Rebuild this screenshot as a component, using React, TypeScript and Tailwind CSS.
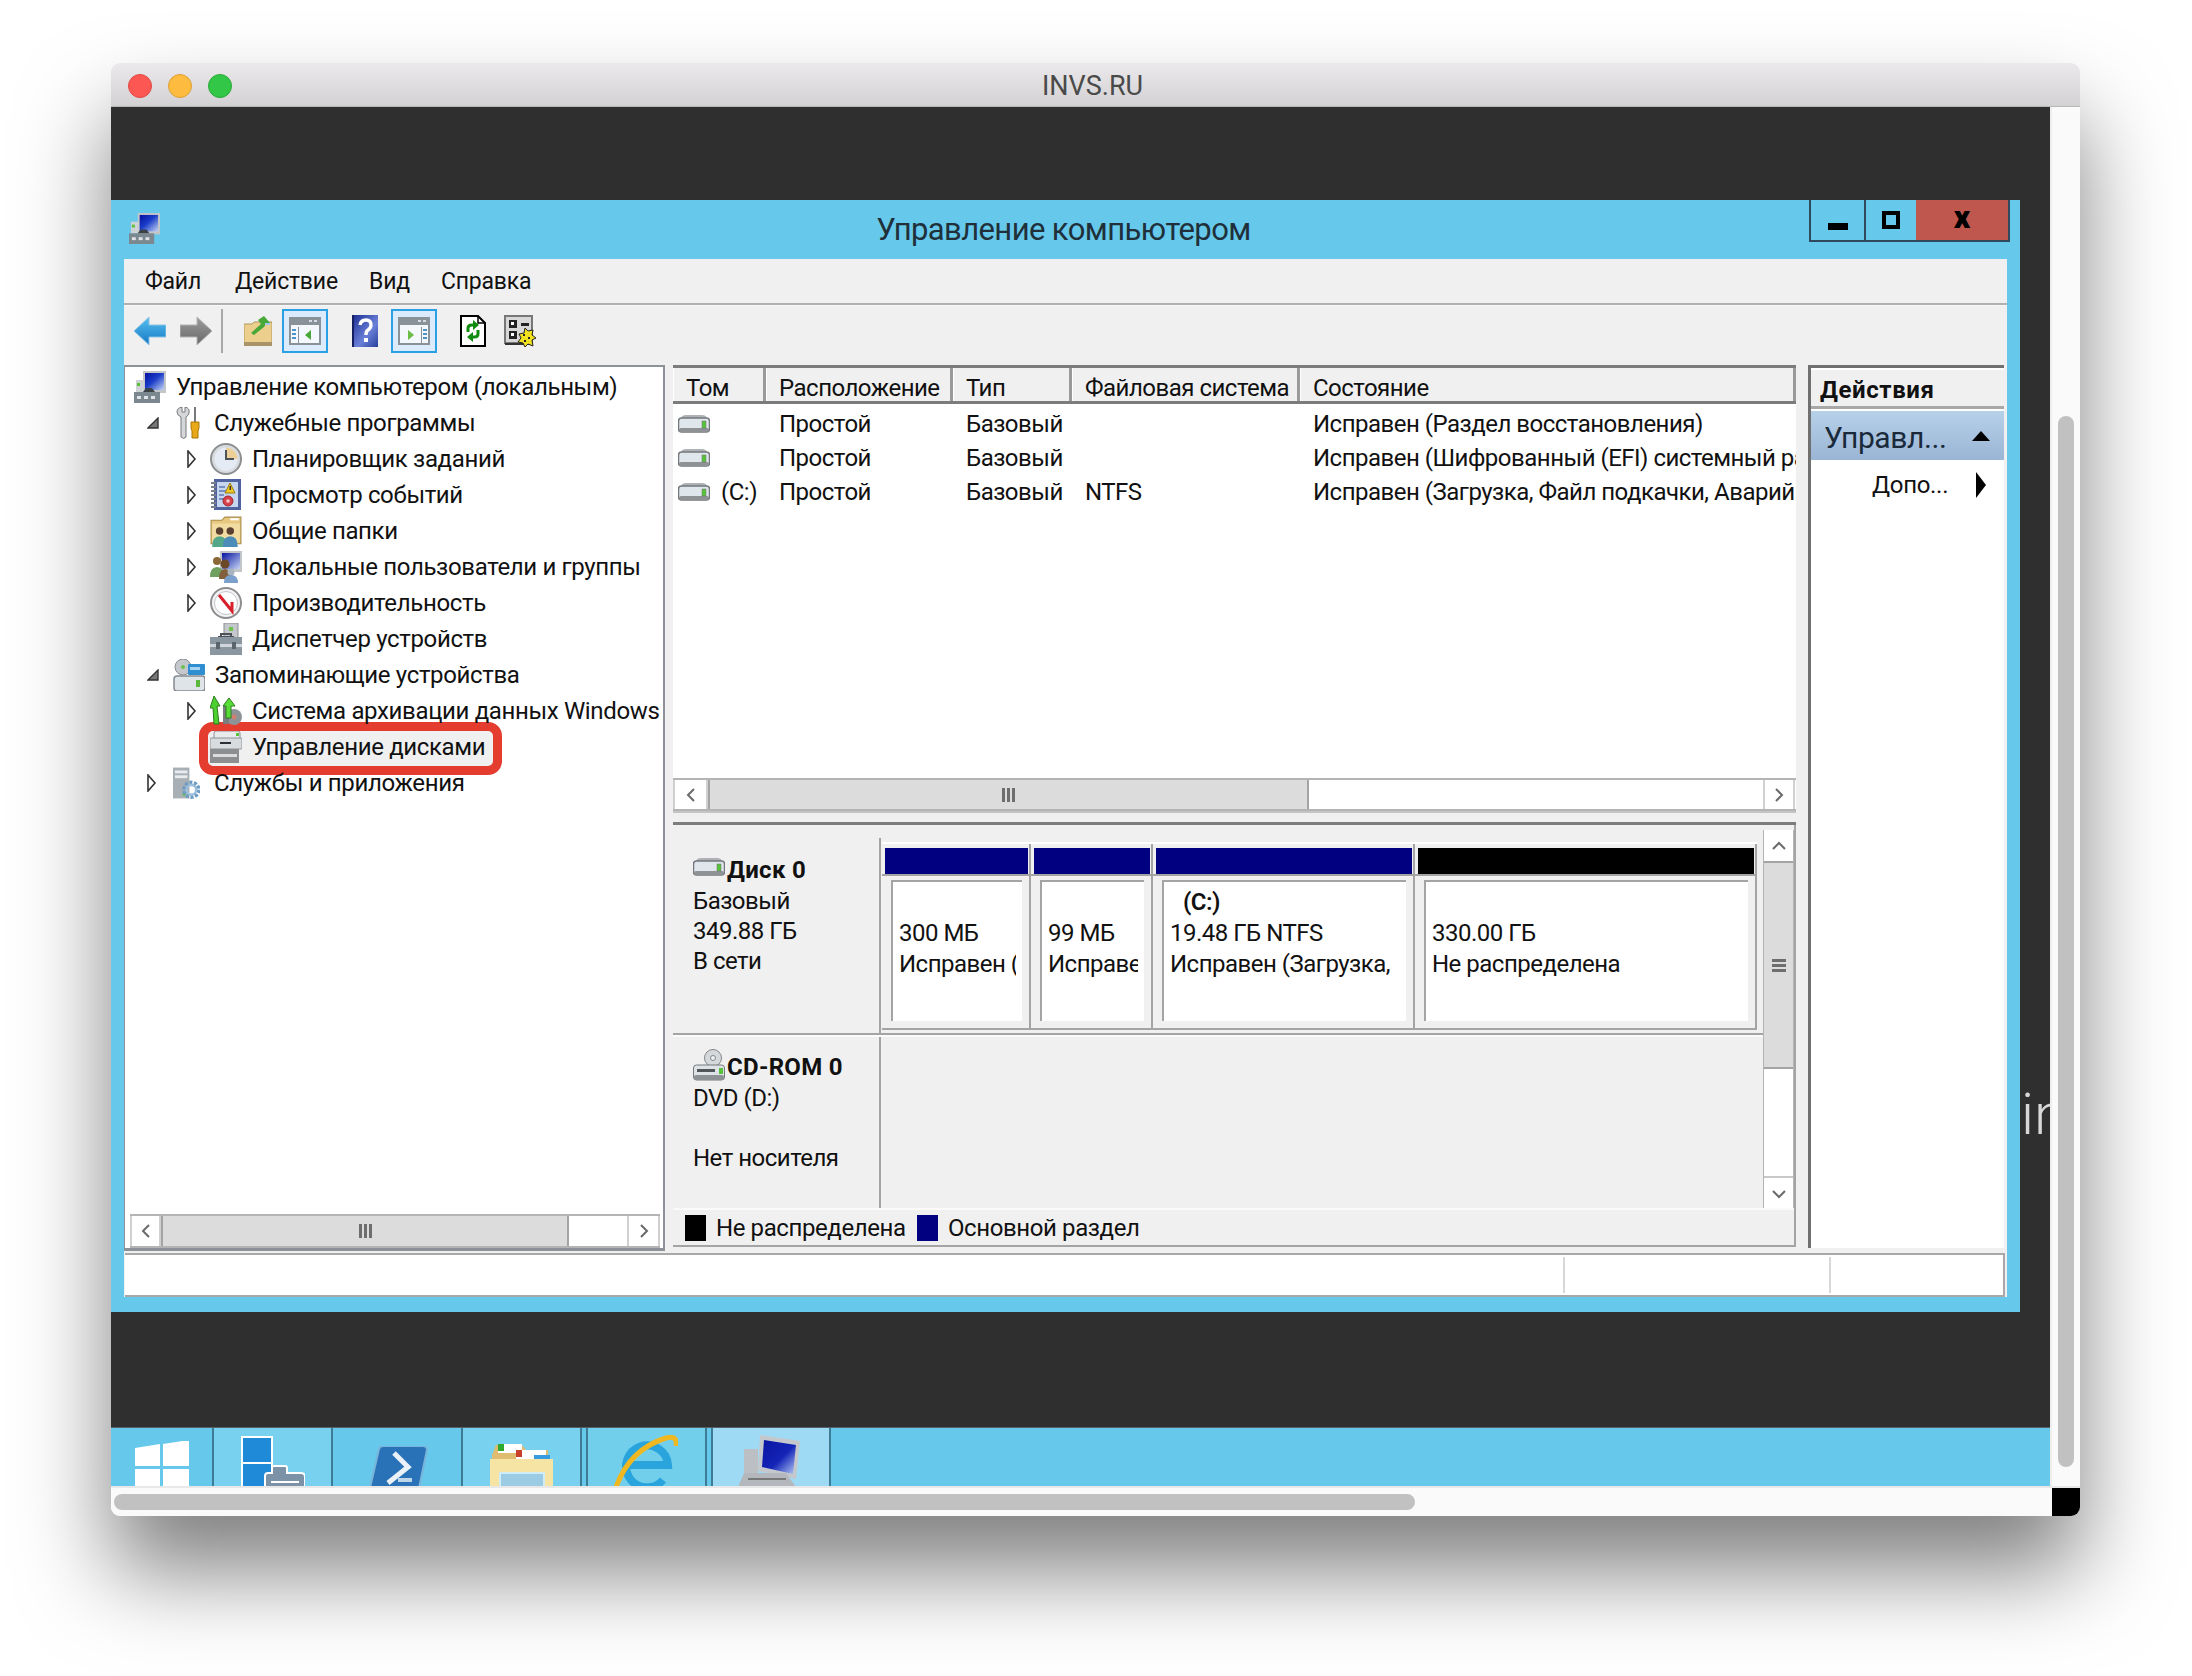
const tree = [
  { level: 0, icon: "computer", label: "Управление компьютером (локальным)" },
  { level: 1, exp: "open", icon: "tools", label: "Служебные программы" },
  { level: 2, exp: "closed", icon: "clock", label: "Планировщик заданий" },
  { level: 2, exp: "closed", icon: "events", label: "Просмотр событий" },
  { level: 2, exp: "closed", icon: "shared", label: "Общие папки" },
  { level: 2, exp: "closed", icon: "users", label: "Локальные пользователи и группы" },
  { level: 2, exp: "closed", icon: "perf", label: "Производительность" },
  { level: 2, icon: "devices", label: "Диспетчер устройств" },
  { level: 1, exp: "open", icon: "storage", label: "Запоминающие устройства" },
  { level: 2, exp: "closed", icon: "backup", label: "Система архивации данных Windows" },
  { level: 2, icon: "disks", label: "Управление дисками", marked: true },
  { level: 1, exp: "closed", icon: "services", label: "Службы и приложения" },
];

const columns = [
  { title: "Том", w: "w-[93px]" },
  { title: "Расположение", w: "w-[187px]" },
  { title: "Тип", w: "w-[119px]" },
  { title: "Файловая система", w: "w-[228px]" },
  { title: "Состояние", w: "flex-1" },
];

const volumes = [
  ["", "Простой", "Базовый", "", "Исправен (Раздел восстановления)"],
  ["", "Простой", "Базовый", "", "Исправен (Шифрованный (EFI) системный раздел)"],
  ["(C:)", "Простой", "Базовый", "NTFS", "Исправен (Загрузка, Файл подкачки, Аварийный дамп)"],
];

const parts = [
  { w: "w-[149px]", bar: "bg-[#000080]", lines: ["", "300 МБ", "Исправен (Раздел"] },
  { w: "w-[122px]", bar: "bg-[#000080]", lines: ["", "99 МБ", "Исправен (Шифр"] },
  { w: "w-[262px]", bar: "bg-[#000080]", lines: ["(C:)", "19.48 ГБ NTFS", "Исправен (Загрузка,"] },
  { w: "w-[342px]", bar: "bg-black", lines: ["", "330.00 ГБ", "Не распределена"] },
];

function Computer({ className }: { className?: string }) {
  return (
    <svg viewBox="0 0 32 32" className={className}>
      <defs>
        <linearGradient id="scr" x1="0" y1="0" x2="1" y2="1">
          <stop offset="0" stopColor="#0612a0" />
          <stop offset="0.45" stopColor="#1a3cc8" />
          <stop offset="1" stopColor="#c4d4f4" />
        </linearGradient>
      </defs>
      <rect x="9" y="0" width="23" height="22" fill="#c3c6c9" />
      <rect x="11" y="2" width="19" height="17" fill="url(#scr)" />
      <rect x="2" y="9" width="8" height="12" fill="#cfd2d4" />
      <rect x="3" y="12" width="3" height="3" fill="#58c23a" />
      <rect x="0" y="21" width="26" height="11" fill="#7c8890" />
      <rect x="3" y="25" width="4" height="3" fill="#dfe3e6" />
      <rect x="10" y="25" width="4" height="3" fill="#dfe3e6" />
      <rect x="17" y="25" width="4" height="3" fill="#dfe3e6" />
      <path d="M9 21l3-4h6l3 4z" fill="#3a4248" />
    </svg>
  );
}

function Tools({ className }: { className?: string }) {
  return (
    <svg viewBox="0 0 24 32" className={className}>
      <path d="M1 5q0-4 5-5v5h3V0q5 1 4 6-1 3-3 4v20q-2 3-5 0V10Q1 8 1 5z" fill="#d4d6d8" stroke="#77797c" />
      <rect x="18" y="0" width="2" height="15" fill="#77797c" />
      <path d="M15 15h8v6l-1 3v7h-6v-7l-1-3z" fill="#e8a818" stroke="#a87808" />
    </svg>
  );
}

function Clock({ className }: { className?: string }) {
  return (
    <svg viewBox="0 0 32 32" className={className}>
      <circle cx="16" cy="16" r="15" fill="#d8dce0" stroke="#8c8e90" strokeWidth="2" />
      <circle cx="16" cy="16" r="11.5" fill="#e4ebf5" />
      <path d="M16 16V4.5A11.5 11.5 0 0 1 27.5 16z" fill="#ecd098" />
      <path d="M16 7v9h8" fill="none" stroke="#4c5358" strokeWidth="2" />
    </svg>
  );
}

function Events({ className }: { className?: string }) {
  return (
    <svg viewBox="0 0 30 32" className={className}>
      <rect x="3" y="0" width="27" height="31" fill="#4e63a0" />
      <rect x="6" y="3" width="21" height="25" fill="#c6d6ee" />
      <path d="M8 8h6M8 12h7M8 16h5M8 20h5" stroke="#5e78b4" strokeWidth="1.5" />
      <path d="M0 4h5M0 8h5M0 12h5M0 16h5M0 20h5M0 24h5M0 28h5" stroke="#7c8088" strokeWidth="2" />
      <path d="M19 4l5 10h-10z" fill="#f0c820" stroke="#9a7c10" />
      <rect x="18.5" y="7" width="1.5" height="4" fill="#333" />
      <circle cx="17" cy="22" r="5" fill="#d8404a" stroke="#a02830" />
      <circle cx="17" cy="22" r="1.8" fill="#f4c8c8" />
    </svg>
  );
}

function Shared({ className }: { className?: string }) {
  return (
    <svg viewBox="0 0 30 30" className={className}>
      <path d="M1 5h10l3-3h15v25H1z" fill="#e8c880" stroke="#a88a48" />
      <rect x="19" y="3" width="8" height="2" fill="#fff" />
      <rect x="2" y="8" width="26" height="18" fill="#f2dca2" />
      <circle cx="9" cy="15" r="3.5" fill="#5a4030" />
      <circle cx="19" cy="15" r="3.5" fill="#5a4030" />
      <path d="M2 30q0-10 7-10t7 10z" fill="#52a888" />
      <path d="M12 30q0-10 7-10t7 10z" fill="#4c8cb8" />
    </svg>
  );
}

function Users({ className }: { className?: string }) {
  return (
    <svg viewBox="0 0 32 32" className={className}>
      <defs>
        <linearGradient id="scr2" x1="0" y1="0" x2="1" y2="1">
          <stop offset="0" stopColor="#0612a0" />
          <stop offset="1" stopColor="#c4d4f4" />
        </linearGradient>
      </defs>
      <rect x="10" y="0" width="22" height="21" fill="#c3c6c9" />
      <rect x="12" y="2" width="18" height="16" fill="url(#scr2)" />
      <circle cx="7" cy="10" r="4" fill="#8a6838" />
      <path d="M0 26q0-10 7-10t7 10z" fill="#70a060" />
      <circle cx="15" cy="13" r="4.5" fill="#6a4828" />
      <path d="M9 28q0-10 6-10t7 10z" fill="#82603c" />
      <circle cx="21" cy="21" r="3.5" fill="#a8b4c0" />
      <path d="M14 32q0-8 7-8t7 8z" fill="#7ca0cc" />
    </svg>
  );
}

function Perf({ className }: { className?: string }) {
  return (
    <svg viewBox="0 0 32 32" className={className}>
      <circle cx="16" cy="16" r="15" fill="#f4f4f6" stroke="#8e8e90" strokeWidth="2" />
      <circle cx="16" cy="16" r="11.5" fill="#fff" stroke="#c4c4c8" />
      <path d="M9 8l13 16v-9" fill="none" stroke="#d8202c" strokeWidth="3" />
    </svg>
  );
}

function Devices({ className }: { className?: string }) {
  return (
    <svg viewBox="0 0 32 32" className={className}>
      <rect x="14" y="0" width="14" height="18" fill="#c4c8cc" stroke="#8a8e92" />
      <rect x="19" y="4" width="4" height="4" fill="#6cc24a" />
      <path d="M8 14h16M11 14v-3h10v3" fill="none" stroke="#4c5258" strokeWidth="2" />
      <rect x="0" y="14" width="32" height="18" fill="#8a96a0" />
      <rect x="0" y="21" width="32" height="3" fill="#cfd5da" />
      <rect x="6" y="19" width="4" height="7" fill="#5a646c" />
      <rect x="22" y="19" width="4" height="7" fill="#5a646c" />
    </svg>
  );
}

function Storage({ className }: { className?: string }) {
  return (
    <svg viewBox="0 0 32 32" className={className}>
      <circle cx="10" cy="8" r="8" fill="#c4c8cc" stroke="#8a8e92" />
      <circle cx="10" cy="8" r="2" fill="#6cc24a" />
      <rect x="15" y="5" width="17" height="11" rx="1" fill="#2f8ed0" />
      <rect x="17" y="8" width="10" height="3" fill="#a4d4f2" />
      <rect x="1" y="17" width="31" height="15" rx="3" fill="#dfe4e8" stroke="#858b90" strokeWidth="1.5" />
      <rect x="23" y="21" width="4" height="7" fill="#5cb83c" />
    </svg>
  );
}

function Backup({ className }: { className?: string }) {
  return (
    <svg viewBox="0 0 32 30" className={className}>
      <circle cx="24" cy="21" r="8" fill="#8e9398" />
      <circle cx="24" cy="21" r="2.5" fill="#d08070" />
      <rect x="13" y="10" width="6" height="18" fill="#7a7e82" />
      <path d="M4 0l6 10-3 0 2 18H4L3 12H0z" fill="#4cd030" stroke="#2e7c1c" />
      <path d="M19 2l6 8h-4v12h-5V10h-3z" fill="#58dc38" stroke="#2e7c1c" />
    </svg>
  );
}

function Disks({ className }: { className?: string }) {
  return (
    <svg viewBox="0 0 32 32" className={className}>
      <rect x="4" y="0" width="26" height="10" rx="2" fill="#e8eaec" stroke="#8a8e92" />
      <rect x="0" y="7" width="32" height="11" rx="1" fill="#d8dcde" stroke="#8e9296" />
      <rect x="10" y="11" width="11" height="2" fill="#2a3036" />
      <rect x="26" y="2" width="3" height="3" fill="#58c23a" />
      <rect x="0" y="18" width="29" height="14" fill="#8c8e90" />
      <rect x="3" y="23" width="24" height="3" fill="#dcdcdc" />
    </svg>
  );
}

function Services({ className }: { className?: string }) {
  return (
    <svg viewBox="0 0 28 32" className={className}>
      <rect x="0" y="0" width="17" height="32" fill="#a8b0b6" />
      <rect x="2" y="3" width="13" height="3" fill="#e8ecee" />
      <rect x="2" y="8" width="13" height="3" fill="#e8ecee" />
      <rect x="10" y="26" width="3" height="3" fill="#58c23a" />
      <circle cx="19" cy="23" r="7" fill="none" stroke="#6e9cc4" strokeWidth="5" strokeDasharray="3 1.4" />
      <circle cx="19" cy="23" r="5" fill="none" stroke="#9cc0dc" strokeWidth="2.5" />
    </svg>
  );
}

function Drive({ className }: { className?: string }) {
  return (
    <svg viewBox="0 0 32 18" className={className}>
      <path d="M3 3Q4 0 8 0h16q4 0 5 3z" fill="#aeb2b6" />
      <rect x="0.5" y="3" width="31" height="14" rx="3" fill="#dfe6ec" stroke="#74787c" strokeWidth="1.5" />
      <rect x="1" y="13" width="30" height="4" rx="2" fill="#8e9294" />
      <rect x="24" y="6" width="4" height="7" fill="#58c23a" stroke="#707070" strokeWidth="0.5" />
    </svg>
  );
}

function CdDrive({ className }: { className?: string }) {
  return (
    <svg viewBox="0 0 32 32" className={className}>
      <circle cx="20" cy="9" r="8.5" fill="#d4d8da" stroke="#84888c" />
      <circle cx="20" cy="9" r="2.5" fill="#f0f0f0" stroke="#84888c" />
      <rect x="0.5" y="16" width="31" height="15" rx="3" fill="#dde2e6" stroke="#74787c" />
      <rect x="4" y="20" width="18" height="3" fill="#50565a" />
      <rect x="1" y="26" width="30" height="5" rx="2" fill="#8e9294" />
      <rect x="26" y="19" width="4" height="6" fill="#58c23a" />
    </svg>
  );
}

const icons: Record<string, (p: { className?: string }) => React.ReactElement> = {
  computer: Computer,
  tools: Tools,
  clock: Clock,
  events: Events,
  shared: Shared,
  users: Users,
  perf: Perf,
  devices: Devices,
  storage: Storage,
  backup: Backup,
  disks: Disks,
  services: Services,
};

function ArrowLeft() {
  return (
    <svg viewBox="0 0 32 28" className="w-[32px] h-[28px]">
      <defs>
        <linearGradient id="ab" x1="0" y1="0" x2="0" y2="1">
          <stop offset="0" stopColor="#58c0f0" />
          <stop offset="1" stopColor="#1478c4" />
        </linearGradient>
      </defs>
      <path d="M0 14L15 0v8h17v12H15v8z" fill="url(#ab)" stroke="#8cc4e4" />
    </svg>
  );
}

function ArrowRight() {
  return (
    <svg viewBox="0 0 32 28" className="w-[32px] h-[28px]">
      <defs>
        <linearGradient id="ag" x1="0" y1="0" x2="0" y2="1">
          <stop offset="0" stopColor="#9c9c9c" />
          <stop offset="1" stopColor="#686868" />
        </linearGradient>
      </defs>
      <path d="M32 14L17 0v8H0v12h17v8z" fill="url(#ag)" stroke="#b4b4b4" />
    </svg>
  );
}

function UpFolder() {
  return (
    <svg viewBox="0 0 28 30" className="w-[28px] h-[30px]">
      <path d="M0 8h8l2-2h18v24H0z" fill="#eccf8c" stroke="#b09860" />
      <rect x="0" y="26" width="28" height="4" fill="#a89468" />
      <path d="M20 0l6 7-4 1 -2 3-10 8-3-2 10-9-3-4z" fill="#48a838" />
      <rect x="21" y="7" width="5" height="2" fill="#a0c8f0" />
    </svg>
  );
}

function PaneIcon({ right }: { right?: boolean }) {
  return (
    <svg viewBox="0 0 32 28" className="w-[32px] h-[28px]">
      <rect x="1" y="1" width="30" height="26" fill="#f4f7fb" stroke="#8a9299" strokeWidth="2" />
      <rect x="1" y="1" width="30" height="7" fill="#8a9299" />
      <rect x="20" y="3" width="3" height="2" fill="#d8dce0" />
      <rect x="25" y="3" width="3" height="2" fill="#d8dce0" />
      {right ? (
        <>
          <rect x="23" y="10" width="1" height="16" fill="#8a9299" />
          <rect x="25" y="12" width="4" height="2" fill="#4c94c8" />
          <rect x="25" y="16" width="4" height="2" fill="#4c94c8" />
          <rect x="25" y="20" width="4" height="2" fill="#4c94c8" />
          <path d="M10 13l6 5-6 5z" fill="#6cbc48" />
        </>
      ) : (
        <>
          <rect x="9" y="10" width="1" height="16" fill="#8a9299" />
          <rect x="3" y="12" width="4" height="2" fill="#4c94c8" />
          <rect x="3" y="16" width="4" height="2" fill="#4c94c8" />
          <rect x="3" y="20" width="4" height="2" fill="#4c94c8" />
          <path d="M22 13l-6 5 6 5z" fill="#48a838" />
        </>
      )}
    </svg>
  );
}

function HelpBook() {
  return (
    <svg viewBox="0 0 26 32" className="w-[26px] h-[32px]">
      <defs>
        <linearGradient id="hb" x1="0" y1="0" x2="1" y2="1">
          <stop offset="0" stopColor="#1a2c90" />
          <stop offset="0.6" stopColor="#6a80d8" />
          <stop offset="1" stopColor="#26409c" />
        </linearGradient>
      </defs>
      <rect width="26" height="32" fill="url(#hb)" />
      <rect width="2" height="32" fill="#141e60" />
      <path d="M8 10q1-5 6-5t5 5q0 3-3 5-2 1-2 5" fill="none" stroke="#fff" strokeWidth="3.4" />
      <rect x="12" y="23" width="4" height="4" fill="#fff" />
    </svg>
  );
}

function RefreshDoc() {
  return (
    <svg viewBox="0 0 26 32" className="w-[26px] h-[32px]">
      <path d="M1 1h17l7 7v23H1z" fill="#fff" stroke="#000" strokeWidth="2" />
      <path d="M18 1v7h7" fill="none" stroke="#000" strokeWidth="1.5" />
      <path d="M8 17v-4q0-3 4-3h2M18 15v4q0 3-4 3h-2" fill="none" stroke="#108c10" strokeWidth="3" />
      <path d="M13 5l6 5-6 5zM13 17l-6 5 6 5z" fill="#108c10" />
    </svg>
  );
}

function PropsIcon() {
  return (
    <svg viewBox="0 0 32 32" className="w-[32px] h-[32px]">
      <rect x="1" y="1" width="27" height="27" fill="#d8d8d8" stroke="#777" strokeWidth="2" />
      <rect x="1" y="28" width="27" height="2" fill="#333" />
      <rect x="5" y="5" width="8" height="8" fill="#222" />
      <rect x="7" y="7" width="3" height="3" fill="#fff" />
      <rect x="17" y="8" width="8" height="3" fill="#222" />
      <rect x="5" y="16" width="8" height="8" fill="#222" />
      <rect x="7" y="18" width="3" height="3" fill="#fff" />
      <path d="M21 13l3 3 5-1-1 5 4 3-4 2 1 6-5-2-3 3-2-4-5-1 3-4-2-4 5-1z" fill="#f0e020" stroke="#222" />
      <path d="M19 19h2v2h-2zM24 22h2v2h-2zM20 25h2v2h-2z" fill="#222" />
    </svg>
  );
}

function Grip({ vertical }: { vertical?: boolean }) {
  return vertical ? (
    <div className="flex flex-col gap-[2px]">
      <div className="w-[14px] h-[3px] bg-[#6e6e6e]" />
      <div className="w-[14px] h-[3px] bg-[#6e6e6e]" />
      <div className="w-[14px] h-[3px] bg-[#6e6e6e]" />
    </div>
  ) : (
    <div className="flex gap-[2px]">
      <div className="w-[3px] h-[14px] bg-[#6e6e6e]" />
      <div className="w-[3px] h-[14px] bg-[#6e6e6e]" />
      <div className="w-[3px] h-[14px] bg-[#6e6e6e]" />
    </div>
  );
}

function Chevron({ dir }: { dir: "l" | "r" | "u" | "d" }) {
  const d = { l: "M9 2L3 8l6 6", r: "M3 2l6 6-6 6", u: "M2 10l6-6 6 6", d: "M2 5l6 6 6-6" }[dir];
  const box = dir === "l" || dir === "r" ? "0 0 12 16" : "0 0 16 14";
  const size = dir === "l" || dir === "r" ? "w-[12px] h-[16px]" : "w-[16px] h-[14px]";
  return (
    <svg viewBox={box} className={size}>
      <path d={d} fill="none" stroke="#6a6a6a" strokeWidth="2" />
    </svg>
  );
}

function HScroll({ first, thumb, gap, last, h }: { first: string; thumb: string; gap: string; last: string; h: string }) {
  return (
    <div className={`flex shrink-0 bg-white border-y-2 border-[#b4b4b4] ${h}`}>
      <div className={`${first} flex items-center justify-center border-x-2 border-[#d0d0d0]`}>
        <Chevron dir="l" />
      </div>
      <div className={`${thumb} bg-[#dcdcdc] border-x-2 border-[#a4a4a4] flex items-center justify-center`}>
        <Grip />
      </div>
      <div className={gap} />
      <div className={`${last} flex items-center justify-center border-x-2 border-[#d0d0d0]`}>
        <Chevron dir="r" />
      </div>
    </div>
  );
}

function TreeRow({ row }: { row: (typeof tree)[number] }) {
  const Icon = icons[row.icon];
  const pad = row.level === 0 ? "pl-[9px]" : row.level === 1 ? "pl-[22px]" : "pl-[62px]";
  const slot = row.level === 0 ? "w-0" : row.level === 1 ? "w-[26px]" : "w-[23px]";
  const text = row.level === 0 ? "ml-[10px]" : "ml-[10px]";
  const wide = row.icon === "tools" ? "w-[24px] h-[32px]" : row.icon === "services" ? "w-[28px] h-[32px]" : "w-[32px] h-[32px]";
  const iconSlot = row.icon === "tools" || row.icon === "services" ? "w-[31px] flex justify-end pr-[4px]" : "w-[32px]";
  return (
    <div className={`relative h-[36px] flex items-center shrink-0 ${pad}`}>
      {row.marked && (
        <div className="absolute left-[74px] top-[-7px] w-[303px] h-[53px] rounded-[14px] border-[9px] border-[#e43d30] bg-[#f0f0f0] z-[5]" />
      )}
      <div className={`relative z-10 shrink-0 flex items-center ${slot}`}>
        {row.exp === "closed" && (
          <svg viewBox="0 0 10 18" className="w-[10px] h-[18px]">
            <path d="M1 1l7 8-7 8z" fill="#fff" stroke="#333" strokeWidth="1.6" />
          </svg>
        )}
        {row.exp === "open" && (
          <svg viewBox="0 0 12 12" className="w-[12px] h-[12px]">
            <path d="M11 1v10H1z" fill="#777" stroke="#333" strokeWidth="1.4" />
          </svg>
        )}
      </div>
      <div className={`relative z-10 shrink-0 ${iconSlot}`}>
        <Icon className={wide} />
      </div>
      <span className={`relative z-10 whitespace-nowrap ${text}`}>{row.label}</span>
    </div>
  );
}

function Part({ part }: { part: (typeof parts)[number] }) {
  return (
    <div className={`${part.w} flex flex-col border-r-2 border-[#a4a4a4] pt-[4px]`}>
      <div className={`h-[26px] ml-[3px] mr-[1px] ${part.bar}`} />
      <div className="h-[2px] bg-[#a4a4a4] mr-[-2px]" />
      <div className="flex-1 pt-[4px] pb-[7px] pl-[9px] pr-[7px] bg-[#f0f0f0] border-b-2 border-[#a4a4a4] flex">
        <div className="flex-1 min-w-0 bg-white border-t-2 border-l-2 border-[#a4a4a4] pt-[5px] pl-[6px] pr-[6px] overflow-hidden">
          {part.lines.map((line, i) => (
            <div key={i} className={`h-[31px] leading-[31px] whitespace-nowrap overflow-hidden ${line === "(C:)" ? "pl-[13px] font-semibold" : ""}`}>
              {line}
            </div>
          ))}
        </div>
      </div>
    </div>
  );
}

export default function App() {
  return (
    <div className="w-[2192px] h-[1676px] bg-white overflow-hidden pl-[111px] pt-[63px] [font-family:Roboto,sans-serif] text-[24px] text-[#111] tracking-[-0.5px]">
      <div className="w-[1969px] h-[1453px] rounded-[9px] overflow-hidden flex flex-col shadow-[0_55px_90px_rgba(0,0,0,0.5)]">
        {/* mac title bar */}
        <div className="relative h-[44px] shrink-0 bg-gradient-to-b from-[#ebe9eb] to-[#d3d1d3] flex items-center justify-center border-b border-[#b8b8b8]">
          <div className="absolute left-[17px] top-[11px] flex gap-[16px]">
            <div className="w-[24px] h-[24px] rounded-full bg-[#fc5753] border border-[#df4744]" />
            <div className="w-[24px] h-[24px] rounded-full bg-[#fdbc40] border border-[#de9f34]" />
            <div className="w-[24px] h-[24px] rounded-full bg-[#33c748] border border-[#27aa35]" />
          </div>
          <span className="text-[#4a4a4a] text-[27px] ml-[-6px] pt-[4px] tracking-normal">INVS.RU</span>
        </div>

        <div className="flex-1 min-h-0 flex">
          {/* remote desktop */}
          <div className="relative w-[1939px] shrink-0 bg-[#2f2f2f] flex flex-col pt-[93px] overflow-hidden">
            <div className="absolute left-[1910px] top-[978px] text-[58px] leading-none text-[#d8d8d8] font-light tracking-normal">in</div>

            <div className="relative w-[1909px] h-[1112px] shrink-0 bg-[#66c8eb] flex flex-col">
              <div className="h-[59px] shrink-0 flex items-start pl-[18px] pr-[10px]">
                <Computer className="w-[31px] h-[31px] mt-[13px] shrink-0" />
                <div className="flex-1 text-center pl-[158px] pt-[11px] text-[31px] leading-[38px] text-[#20303a] tracking-[-0.6px]">Управление компьютером</div>
                <div className="flex h-[42px] border-2 border-t-0 border-[#2f4a5c]">
                  <div className="w-[55px] border-r-2 border-[#2f4a5c] flex items-end justify-center pb-[10px]">
                    <div className="w-[20px] h-[7px] bg-black" />
                  </div>
                  <div className="w-[50px] flex items-start justify-center pt-[11px]">
                    <div className="w-[18px] h-[18px] border-[4px] border-black" />
                  </div>
                  <div className="w-[92px] bg-[#c0574f] flex items-center justify-center text-[32px] font-black text-black pb-[6px] tracking-normal">x</div>
                </div>
              </div>

              <div className="mx-[13px] w-[1883px] h-[1038px] bg-[#f0f0f0] flex flex-col">
                {/* menu */}
                <div className="h-[46px] shrink-0 flex items-center pl-[21px] pt-[2px] border-b-2 border-[#b0b0b0] text-[23px] tracking-[-0.2px]">
                  <span className="w-[90px]">Файл</span>
                  <span className="w-[134px]">Действие</span>
                  <span className="w-[72px]">Вид</span>
                  <span>Справка</span>
                </div>
                {/* toolbar */}
                <div className="h-[60px] shrink-0 flex items-center pl-[10px] pb-[10px] border-t border-[#f8f8f8]">
                  <ArrowLeft />
                  <div className="ml-[14px]">
                    <ArrowRight />
                  </div>
                  <div className="ml-[9px] w-[2px] h-[44px] bg-[#a8a8a8]" />
                  <div className="ml-[21px]">
                    <UpFolder />
                  </div>
                  <div className="ml-[10px] w-[46px] h-[44px] bg-[#dcebfb] border-2 border-[#2ca0e5] flex items-center justify-center">
                    <PaneIcon />
                  </div>
                  <div className="ml-[24px]">
                    <HelpBook />
                  </div>
                  <div className="ml-[13px] w-[46px] h-[44px] bg-[#dcebfb] border-2 border-[#2ca0e5] flex items-center justify-center">
                    <PaneIcon right />
                  </div>
                  <div className="ml-[23px]">
                    <RefreshDoc />
                  </div>
                  <div className="ml-[18px]">
                    <PropsIcon />
                  </div>
                </div>

                {/* panes */}
                <div className="h-[888px] shrink-0 flex">
                  {/* tree */}
                  <div className="w-[541px] h-[886px] shrink-0 bg-white border-t-[2px] border-r-[2px] border-l border-b-[3px] border-[#8c9298] flex flex-col tracking-[-0.35px]">
                    <div className="pt-[2px] flex-1 min-h-0 flex flex-col">
                      {tree.map((row) => (
                        <TreeRow key={row.label} row={row} />
                      ))}
                    </div>
                    <div className="pl-[5px] pr-[3px]">
                      <HScroll first="w-[31px]" thumb="w-[408px]" gap="w-[58px]" last="w-[33px]" h="h-[34px]" />
                    </div>
                  </div>

                  {/* center */}
                  <div className="ml-[8px] w-[1123px] shrink-0 flex flex-col">
                    <div className="h-[446px] shrink-0 bg-white border-t-[3px] border-[#7c7c7c] flex flex-col">
                      <div className="h-[36px] shrink-0 flex bg-[#f0f0f0] border-b-[3px] border-[#7c7c7c]">
                        {columns.map((c) => (
                          <div key={c.title} className={`${c.w} pl-[12px] pt-[6px] flex items-center border-r-[3px] border-[#9a9a9a] border-l border-l-white whitespace-nowrap overflow-hidden`}>
                            {c.title}
                          </div>
                        ))}
                      </div>
                      <div className="flex-1 pt-[3px] overflow-hidden">
                        {volumes.map((v, i) => (
                          <div key={i} className="h-[34px] flex items-center whitespace-nowrap">
                            <div className="w-[93px] shrink-0 flex items-center pl-[5px] gap-[11px]">
                              <Drive className="w-[32px] h-[18px] shrink-0" />
                              <span>{v[0]}</span>
                            </div>
                            <div className="w-[187px] shrink-0 pl-[13px]">{v[1]}</div>
                            <div className="w-[119px] shrink-0 pl-[13px]">{v[2]}</div>
                            <div className="w-[228px] shrink-0 pl-[13px]">{v[3]}</div>
                            <div className="flex-1 min-w-0 pl-[13px] overflow-hidden">{v[4]}</div>
                          </div>
                        ))}
                      </div>
                      <HScroll first="w-[35px]" thumb="w-[601px]" gap="w-[454px]" last="w-[32px]" h="h-[33px]" />
                    </div>

                    {/* splitter */}
                    <div className="h-[14px] shrink-0 bg-[#f0f0f0] border-t-2 border-[#c4c4c4] border-b-[3px] border-b-[#7c7c7c]" />

                    {/* graphical view */}
                    <div className="h-[422px] shrink-0 flex flex-col bg-[#f0f0f0] border-r-2 border-[#a4a4a4]">
                      <div className="h-[383px] shrink-0 pt-[5px] flex">
                        <div className="w-[1090px] shrink-0 pt-[8px] flex flex-col">
                          <div className="h-[197px] shrink-0 flex border-b-2 border-[#a4a4a4]">
                            <div className="w-[203px] pl-[20px] pt-[17px] flex flex-col">
                              <div className="flex items-center h-[30px]">
                                <Drive className="w-[32px] h-[18px] mt-[-6px]" />
                                <span className="ml-[2px] font-bold tracking-[0.3px]">Диск 0</span>
                              </div>
                              <div className="h-[30px] leading-[30px] mt-[1px]">Базовый</div>
                              <div className="h-[30px] leading-[30px]">349.88 ГБ</div>
                              <div className="h-[30px] leading-[30px]">В сети</div>
                            </div>
                            <div className="w-[3px] border-l-2 border-[#a4a4a4] ml-[3px]" />
                            <div className="flex h-[188px] mt-[4px] border-t-2 border-white">
                              {parts.map((p) => (
                                <Part key={p.lines[1]} part={p} />
                              ))}
                            </div>
                          </div>
                          <div className="flex-1 flex border-t-2 border-[#fafafa]">
                            <div className="w-[203px] pl-[20px] pt-[14px] flex flex-col">
                              <div className="flex items-center h-[32px]">
                                <CdDrive className="w-[32px] h-[32px] mt-[-4px]" />
                                <span className="ml-[2px] font-bold tracking-[0.3px]">CD-ROM 0</span>
                              </div>
                              <div className="h-[30px] leading-[30px]">DVD (D:)</div>
                              <div className="h-[30px] leading-[30px] mt-[30px]">Нет носителя</div>
                            </div>
                            <div className="w-[2px] ml-[3px] bg-[#a4a4a4]" />
                          </div>
                        </div>
                        <div className="w-[31px] shrink-0 flex flex-col bg-white border-x border-[#b4b4b4]">
                          <div className="h-[31px] flex items-center justify-center">
                            <Chevron dir="u" />
                          </div>
                          <div className="h-[208px] bg-[#dcdcdc] border-y-2 border-[#a4a4a4] flex items-center justify-center">
                            <Grip vertical />
                          </div>
                          <div className="flex-1" />
                          <div className="h-[32px] flex items-center justify-center border-t-2 border-[#c8c8c8]">
                            <Chevron dir="d" />
                          </div>
                        </div>
                      </div>
                      <div className="h-[39px] shrink-0 flex items-center pl-[12px] pt-[1px] border-t-2 border-[#fafafa] border-b-2 border-b-[#a4a4a4] whitespace-nowrap tracking-[-0.4px]">
                        <div className="w-[21px] h-[26px] bg-black" />
                        <span className="ml-[10px] w-[201px]">Не распределена</span>
                        <div className="w-[21px] h-[26px] bg-[#000080]" />
                        <span className="ml-[10px]">Основной раздел</span>
                      </div>
                    </div>
                  </div>

                  {/* actions */}
                  <div className="ml-[12px] w-[196px] h-[883px] shrink-0 bg-white border-l-[3px] border-t-[3px] border-[#707070] flex flex-col">
                    <div className="h-[41px] shrink-0 bg-[#f0f0f0] border-b-[3px] border-[#a8a8a8] border-t-2 border-t-white pl-[9px] pt-[3px] flex items-center font-bold tracking-[0.6px]">Действия</div>
                    <div className="mt-[2px] h-[49px] shrink-0 bg-gradient-to-b from-[#b7d1ea] to-[#9ab5d5] flex items-center pl-[13px] pr-[14px] pt-[4px] justify-between text-[30px] tracking-[-0.4px] text-[#1a2a3a]">
                      <span>Управл...</span>
                      <svg viewBox="0 0 18 10" className="w-[18px] h-[10px] mt-[-4px]">
                        <path d="M9 0l9 10H0z" fill="#000" />
                      </svg>
                    </div>
                    <div className="h-[50px] shrink-0 flex items-center pl-[61px] pr-[18px] justify-between tracking-[-0.3px]">
                      <span>Допо...</span>
                      <svg viewBox="0 0 10 26" className="w-[10px] h-[26px]">
                        <path d="M0 0l10 13L0 26z" fill="#000" />
                      </svg>
                    </div>
                  </div>
                </div>

                {/* status bar */}
                <div className="h-[44px] shrink-0 ml-[1px] mr-[2px] bg-white border-t-2 border-b-2 border-r-2 border-[#a8a8a8] flex">
                  <div className="w-[1440px] border-r-2 border-[#d8d8d8] my-[2px]" />
                  <div className="w-[266px] border-r-2 border-[#d8d8d8] my-[2px]" />
                </div>
              </div>
            </div>

            {/* task bar */}
            <div className="mt-auto h-[59px] shrink-0 border-t border-[#565f64] bg-[#66c8eb] flex overflow-hidden">
              <div className="w-[103px] shrink-0 border-r-2 border-[#3e7c96] pl-[24px] pt-[13px]">
                <svg viewBox="0 0 54 50" className="w-[54px] h-[50px]">
                  <path d="M0 7l25-4v22H0zM28 3l26-4v26H28zM0 28h25v22H0zM28 28h26v22H28z" fill="#fff" />
                </svg>
              </div>
              <div className="w-[119px] shrink-0 bg-[#78d1ee] border-r-2 border-[#3e7c96] pl-[27px] pt-[8px]">
                <svg viewBox="0 0 64 56" className="w-[64px] h-[56px]">
                  <rect x="1" y="1" width="30" height="26" fill="#1e8ad8" stroke="#fff" strokeWidth="2" />
                  <rect x="1" y="27" width="30" height="29" fill="#1e8ad8" stroke="#fff" strokeWidth="2" />
                  <path d="M24 40q0-3 3-3h4v-5q0-2 2-2h11q2 0 2 2v5h14q4 0 4 4v18H24z" fill="#7c92a6" stroke="#fff" strokeWidth="2" />
                  <path d="M30 46h28" stroke="#fff" strokeWidth="2" />
                </svg>
              </div>
              <div className="w-[130px] shrink-0 border-r-2 border-[#3e7c96] pl-[37px] pt-[18px]">
                <svg viewBox="0 0 58 42" className="w-[58px] h-[42px]">
                  <path d="M9 3q1-3 4-3h40q4 0 4 4l-8 38H0z" fill="#2a72b8" stroke="#7ab4d8" strokeWidth="2" />
                  <path d="M24 7l14 14-20 16" fill="none" stroke="#fff" strokeWidth="5" opacity="0.9" />
                  <rect x="28" y="32" width="14" height="4" fill="#fff" opacity="0.7" />
                </svg>
              </div>
              <div className="w-[119px] shrink-0 bg-[#78d1ee] border-r-2 border-[#3e7c96] pl-[27px] pt-[13px]">
                <svg viewBox="0 0 63 46" className="w-[63px] h-[46px]">
                  <path d="M6 4h26l4 5h22v37H2V14z" fill="#e0bc70" />
                  <rect x="8" y="3" width="24" height="9" fill="#fff" />
                  <rect x="8" y="3" width="6" height="7" fill="#2eaa2e" />
                  <rect x="26" y="9" width="30" height="9" fill="#fff" />
                  <rect x="26" y="9" width="6" height="7" fill="#c8402a" />
                  <rect x="44" y="14" width="16" height="6" fill="#3a9ce0" />
                  <rect x="0" y="18" width="63" height="28" fill="#f6e4a4" />
                  <rect x="10" y="32" width="44" height="14" fill="#9ccce4" stroke="#d0ecf4" strokeWidth="2" />
                </svg>
              </div>
              <div className="w-[121px] ml-[4px] shrink-0 bg-[#72cfec] border-x-2 border-[#3e7c96] pl-[26px] pt-[7px]">
                <svg viewBox="0 0 64 52" className="w-[64px] h-[52px]">
                  <path d="M12 30h42a21 21 0 1 0-5 15" fill="none" stroke="#2aa4dc" strokeWidth="8" />
                  <path d="M2 52Q16 14 52 3q12-3 10 8" fill="none" stroke="#f0b820" strokeWidth="5" />
                </svg>
              </div>
              <div className="w-[120px] shrink-0 bg-[#9fdaf5] border-x-2 border-[#3e7c96] ml-[4px] pl-[25px] pt-[7px]">
                <svg viewBox="0 0 62 52" className="w-[62px] h-[52px]">
                  <defs>
                    <linearGradient id="tb" x1="0" y1="0" x2="1" y2="1">
                      <stop offset="0" stopColor="#0a14a0" />
                      <stop offset="0.55" stopColor="#1424b8" />
                      <stop offset="1" stopColor="#b8ccf4" />
                    </linearGradient>
                  </defs>
                  <path d="M22 0l40 6-4 38-38-8z" fill="#c4c8cc" />
                  <path d="M26 5l32 5-3 29-31-7z" fill="url(#tb)" />
                  <rect x="6" y="14" width="14" height="24" fill="#bcc0c4" />
                  <path d="M0 52l6-14h42l10 14z" fill="#b4b8bc" />
                  <path d="M10 44h38" stroke="#777" strokeWidth="2" />
                </svg>
              </div>
            </div>
          </div>

          {/* outer vertical scrollbar */}
          <div className="flex-1 bg-[#fafafa] border-l-2 border-[#eeeeee] pl-[6px] pt-[309px]">
            <div className="w-[16px] h-[1051px] rounded-full bg-[#c1c1c1]" />
          </div>
        </div>

        {/* outer horizontal scrollbar */}
        <div className="h-[30px] shrink-0 flex bg-[#fafafa] border-t-2 border-[#e8e8e8]">
          <div className="w-[1941px] shrink-0 pl-[3px] pt-[6px]">
            <div className="w-[1301px] h-[16px] rounded-full bg-[#c1c1c1]" />
          </div>
          <div className="flex-1 bg-black" />
        </div>
      </div>
    </div>
  );
}
